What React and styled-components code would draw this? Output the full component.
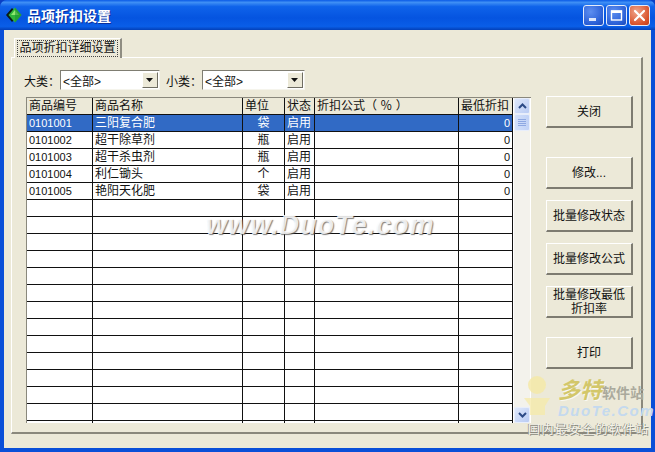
// App.jsx - item discount settings dialog
import React from 'react';
import styled, { createGlobalStyle } from 'styled-components';

const GlobalStyle = createGlobalStyle`
  html, body {
    margin: 0;
    padding: 0;
    background: #0a3fc4;
  }
  * {
    box-sizing: border-box;
  }
`;

const FONT = `"Liberation Sans", "Noto Sans CJK SC", sans-serif`;

const Win = styled.div`
  position: relative;
  width: 655px;
  height: 452px;
  display: flex;
  flex-direction: column;
  overflow: hidden;
  background: #0a4fd8;
  border-radius: 7px 7px 0 0;
  font-family: ${FONT};
  font-size: 12px;
  color: #111;
`;

const TitleBar = styled.div`
  height: 30px;
  flex: none;
  display: flex;
  align-items: center;
  padding: 0 5px 0 6px;
  background: linear-gradient(180deg, #0a5ae6 0%, #3f8ff5 8%, #0f63ea 22%, #0554e0 60%, #0a5ee8 88%, #0340b8 100%);
`;

const AppIcon = styled.svg`
  width: 16px;
  height: 16px;
  margin-right: 5px;
`;

const TitleText = styled.div`
  flex: 1;
  font-size: 14px;
  font-weight: bold;
  color: #fff;
  text-shadow: 1px 1px 0 #0a2f9c;
`;

const CtlButton = styled.div`
  width: 21px;
  height: 21px;
  margin-left: 2px;
  display: flex;
  align-items: center;
  justify-content: center;
  border: 1px solid #e4ecfb;
  border-radius: 3px;
  background: ${p => p.$close
    ? 'radial-gradient(circle at 35% 30%, #f0a58c, #d9532c 70%, #c23c18)'
    : 'radial-gradient(circle at 35% 30%, #5d8ef0, #2a5fd6 70%, #1c48b8)'};
`;

const Body = styled.div`
  flex: 1;
  margin: 0 4px 4px 4px;
  padding: 8px 8px 14px 7px;
  background: #ece9d8;
  display: flex;
  flex-direction: column;
`;

const TabStrip = styled.div`
  height: 20px;
  flex: none;
  display: flex;
  padding-left: 3px;
  margin-bottom: -1px;
  position: relative;
  z-index: 1;
`;

const Tab = styled.div`
  width: 108px;
  height: 20px;
  display: flex;
  align-items: center;
  justify-content: center;
  background: #ece9d8;
  border-top: 1px solid #fff;
  border-left: 1px solid #fff;
  border-right: 2px solid #8f8d82;
`;

const TabLabel = styled.span`
  outline: 1px dotted #444;
  padding: 0 1px;
  line-height: 15px;
`;

const Panel = styled.div`
  flex: 1;
  min-height: 0;
  display: flex;
  border-top: 1px solid #fff;
  border-left: 1px solid #fff;
  border-right: 2px solid #8a887c;
  border-bottom: 2px solid #8a887c;
  padding: 12px 0 0 14px;
`;

const Main = styled.div`
  width: 505px;
  flex: none;
  display: flex;
  flex-direction: column;
`;

const FilterRow = styled.div`
  height: 20px;
  flex: none;
  margin-bottom: 7px;
  margin-left: -2px;
  display: flex;
  align-items: center;
  font-size: 12px;
`;

const FilterLabel = styled.span`
  width: ${p => p.$w}px;
  flex: none;
  white-space: nowrap;
`;

const Select = styled.div`
  width: ${p => p.$w}px;
  height: 20px;
  flex: none;
  margin-right: 6px;
  display: flex;
  align-items: center;
  justify-content: space-between;
  padding: 1px 1px 1px 2px;
  background: #fff;
  border-top: 1px solid #7f7d72;
  border-left: 1px solid #7f7d72;
  border-right: 1px solid #f5f4ec;
  border-bottom: 1px solid #f5f4ec;
`;

const SelectArrow = styled.div`
  width: 16px;
  height: 16px;
  display: flex;
  align-items: center;
  justify-content: center;
  background: #ece9d8;
  border-top: 1px solid #fff;
  border-left: 1px solid #fff;
  border-right: 1px solid #6f6d62;
  border-bottom: 1px solid #6f6d62;
`;

const GridWrap = styled.div`
  height: 326px;
  flex: none;
  display: flex;
  overflow: hidden;
  background: #fff;
  border-top: 1px solid #8a887c;
  border-left: 1px solid #8a887c;
`;

const Table = styled.div`
  width: 486px;
  flex: none;
`;

const Row = styled.div`
  display: grid;
  grid-template-columns: 66px 150px 42px 30px 144px 54px;
  height: 17px;
  background: ${p => (p.$head ? '#ece9d8' : p.$selected ? '#316ac5' : '#fff')};
  color: ${p => (p.$selected ? '#fff' : '#111')};
`;

const Cell = styled.div`
  border-right: 1px solid #111;
  border-bottom: 1px solid #111;
  padding: 0 2px;
  line-height: 17px;
  font-size: ${p => (p.$head ? 12 : 11)}px;
  text-align: ${p => p.$align || 'left'};
  white-space: nowrap;
  overflow: hidden;
`;

const CjkCell = styled(Cell)`
  font-size: 12px;
`;

const ScrollBar = styled.div`
  width: 16px;
  flex: none;
  margin-left: 1px;
  display: flex;
  flex-direction: column;
  background: #f3f2ec;
`;

const ScrollBtn = styled.div`
  height: 16px;
  flex: none;
  display: flex;
  align-items: center;
  justify-content: center;
  background: linear-gradient(135deg, #dfe8fb, #b9cbf3);
  border: 1px solid #e8eefb;
  border-radius: 2px;
`;

const ScrollThumb = styled.div`
  height: 17px;
  flex: none;
  display: flex;
  flex-direction: column;
  justify-content: center;
  align-items: center;
  gap: 1px;
  background: linear-gradient(90deg, #d3e0fa, #c1d2f6);
  border: 1px solid #e8eefb;
  border-radius: 2px;
`;

const Grip = styled.div`
  width: 8px;
  height: 1px;
  background: #8ea8e2;
`;

const ScrollTrack = styled.div`
  flex: 1;
`;

const Side = styled.div`
  width: 87px;
  flex: none;
  margin-left: 15px;
  padding-top: 26px;
  display: flex;
  flex-direction: column;
`;

const Button = styled.div`
  height: 32px;
  flex: none;
  margin-top: ${p => p.$gap}px;
  display: flex;
  align-items: center;
  justify-content: center;
  text-align: center;
  line-height: 14px;
  font-size: 12px;
  background: #ece9d8;
  border-top: 1px solid #fff;
  border-left: 1px solid #fff;
  border-right: 2px solid #7d7b70;
  border-bottom: 2px solid #7d7b70;
`;

const Watermark = styled.div`
  position: absolute;
  left: 206px;
  top: 210px;
  font-family: "Liberation Sans", sans-serif;
  font-size: 27px;
  font-weight: bold;
  font-style: italic;
  letter-spacing: 1px;
  color: rgba(255, 255, 255, 0.85);
  text-shadow: 1px 1px 1px rgba(90, 90, 90, 0.75);
  pointer-events: none;
  white-space: nowrap;
`;

const Logo = styled.div`
  position: absolute;
  left: 518px;
  top: 372px;
  width: 134px;
  height: 64px;
  pointer-events: none;
`;

const LogoFigure = styled.svg`
  position: absolute;
  left: 2px;
  top: 2px;
  width: 34px;
  height: 42px;
`;

const LogoBig = styled.div`
  position: absolute;
  left: 40px;
  top: 0;
  font-size: 22px;
  font-weight: bold;
  font-style: italic;
  color: #d3c76a;
  text-shadow: 1px 1px 0 rgba(255, 255, 255, 0.7);
  white-space: nowrap;
`;

const LogoSmall = styled.span`
  font-size: 14px;
  font-weight: bold;
  font-style: normal;
  color: #aaa99c;
  text-shadow: none;
`;

const LogoUrl = styled.div`
  position: absolute;
  left: 40px;
  top: 30px;
  font-size: 15px;
  font-weight: bold;
  font-style: italic;
  letter-spacing: 1.5px;
  color: #c4d9ee;
  white-space: nowrap;
`;

const LogoSlogan = styled.div`
  position: absolute;
  left: 10px;
  top: 48px;
  font-size: 12px;
  letter-spacing: 1.5px;
  color: #f4f3ea;
  text-shadow: 1px 1px 0 #8a8a80, -1px 0 0 #9a9a90;
  white-space: nowrap;
`;

const columns = [
  { key: 'code', title: '商品编号' },
  { key: 'name', title: '商品名称', cjk: true },
  { key: 'unit', title: '单位', align: 'center', cjk: true },
  { key: 'state', title: '状态', cjk: true },
  { key: 'formula', title: '折扣公式（ ％ ）', cjk: true },
  { key: 'min', title: '最低折扣', align: 'right' },
];

const items = [
  { code: '0101001', name: '三阳复合肥', unit: '袋', state: '启用', formula: '', min: '0' },
  { code: '0101002', name: '超干除草剂', unit: '瓶', state: '启用', formula: '', min: '0' },
  { code: '0101003', name: '超干杀虫剂', unit: '瓶', state: '启用', formula: '', min: '0' },
  { code: '0101004', name: '利仁锄头', unit: '个', state: '启用', formula: '', min: '0' },
  { code: '0101005', name: '艳阳天化肥', unit: '袋', state: '启用', formula: '', min: '0' },
];

const rows = [...items, ...Array(14).fill({})];

const buttons = [
  { label: '关闭', gap: 0 },
  { label: '修改...', gap: 29 },
  { label: '批量修改状态', gap: 11 },
  { label: '批量修改公式', gap: 11 },
  { label: <>批量修改最低<br />折扣率</>, gap: 11 },
  { label: '打印', gap: 19 },
];

const DownArrow = () => (
  <svg width="8" height="5" viewBox="0 0 8 5"><path d="M0 0h7L3.5 4z" fill="#111" /></svg>
);

const Chevron = ({ up }) => (
  <svg width="9" height="6" viewBox="0 0 9 6">
    <path d={up ? 'M1 5l3.5-3.5L8 5' : 'M1 1l3.5 3.5L8 1'} fill="none" stroke="#2c4a86" strokeWidth="2" />
  </svg>
);

export default function App() {
  return (
    <Win>
      <GlobalStyle />
      <TitleBar>
        <AppIcon viewBox="0 0 16 16">
          <path d="M6 1L0 8l6 7 2-2-4-5 4-5z" fill="#0c1c14" />
          <path d="M9 0.5L2.5 8 9 15.5 15.5 8z" fill="#2fb53c" />
          <path d="M9 3L5 8h8z" fill="#8fe86f" />
          <path d="M9 0.5L15.5 8 9 15.5z" fill="#1b8f2e" opacity="0.55" />
        </AppIcon>
        <TitleText>品项折扣设置</TitleText>
        <CtlButton>
          <svg width="13" height="13" viewBox="0 0 13 13"><rect x="2" y="9" width="7" height="3" fill="#dfe8fb" /></svg>
        </CtlButton>
        <CtlButton>
          <svg width="13" height="13" viewBox="0 0 13 13">
            <rect x="1.5" y="2" width="10" height="9" fill="none" stroke="#fff" strokeWidth="1.4" />
            <rect x="1" y="1.5" width="11" height="2.5" fill="#fff" />
          </svg>
        </CtlButton>
        <CtlButton $close>
          <svg width="13" height="13" viewBox="0 0 13 13">
            <path d="M2 2l9 9M11 2l-9 9" stroke="#fff" strokeWidth="2.2" strokeLinecap="round" />
          </svg>
        </CtlButton>
      </TitleBar>
      <Body>
        <TabStrip>
          <Tab><TabLabel>品项折扣详细设置</TabLabel></Tab>
        </TabStrip>
        <Panel>
          <Main>
            <FilterRow>
              <FilterLabel $w={36}>大类：</FilterLabel>
              <Select $w={100}>&lt;全部&gt;<SelectArrow><DownArrow /></SelectArrow></Select>
              <FilterLabel $w={36}>小类：</FilterLabel>
              <Select $w={103}>&lt;全部&gt;<SelectArrow><DownArrow /></SelectArrow></Select>
            </FilterRow>
            <GridWrap>
              <Table>
                <Row $head>
                  {columns.map(c => <Cell key={c.key} $head>{c.title}</Cell>)}
                </Row>
                {rows.map((r, i) => (
                  <Row key={i} $selected={i === 0}>
                    {columns.map(c => {
                      const C = c.cjk ? CjkCell : Cell;
                      return <C key={c.key} $align={c.align}>{r[c.key]}</C>;
                    })}
                  </Row>
                ))}
              </Table>
              <ScrollBar>
                <ScrollBtn><Chevron up /></ScrollBtn>
                <ScrollThumb><Grip /><Grip /><Grip /><Grip /></ScrollThumb>
                <ScrollTrack />
                <ScrollBtn><Chevron /></ScrollBtn>
              </ScrollBar>
            </GridWrap>
          </Main>
          <Side>
            {buttons.map((b, i) => <Button key={i} $gap={b.gap}>{b.label}</Button>)}
          </Side>
        </Panel>
      </Body>
      <Watermark>www.DuoTe.com</Watermark>
      <Logo>
        <LogoFigure viewBox="0 0 34 42">
          <circle cx="17" cy="11" r="9" fill="#f5e9a8" opacity="0.85" />
          <path d="M4 24h26l-5 8v9H10v-9z" fill="#f5e9a8" opacity="0.75" />
        </LogoFigure>
        <LogoBig>多特<LogoSmall>软件站</LogoSmall></LogoBig>
        <LogoUrl>DuoTe.Com</LogoUrl>
        <LogoSlogan>国内最安全的软件站</LogoSlogan>
      </Logo>
    </Win>
  );
}
